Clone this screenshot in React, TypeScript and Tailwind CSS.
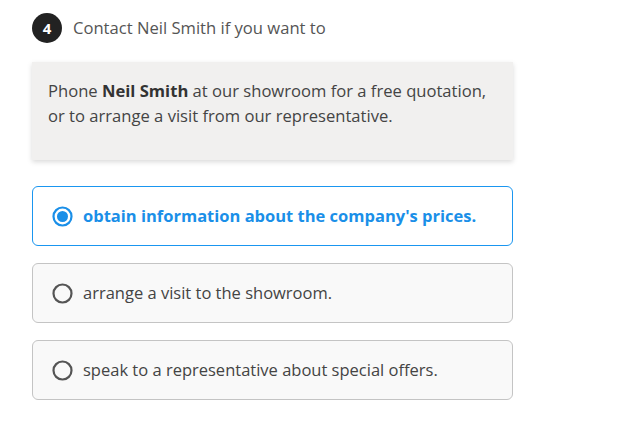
import React from "react";

const options = [
  { text: "obtain information about the company's prices.", selected: true },
  { text: "arrange a visit to the showroom.", selected: false },
  { text: "speak to a representative about special offers.", selected: false },
];

export default function App() {
  return (
    <div
      className="w-[641px] h-[445px] bg-white text-[#444]"
      style={{ fontFamily: '"Open Sans", sans-serif' }}
    >
      <div className="pl-[32px] pt-[13px] w-[513px]">
        <div className="flex items-center gap-[11px]">
          <div className="w-[30px] h-[30px] rounded-full bg-[#222] text-white flex items-center justify-center text-[15px] font-bold">
            4
          </div>
          <div className="text-[16.6px] text-[#555]">Contact Neil Smith if you want to</div>
        </div>
        <div className="mt-[19px] bg-[#f1f0ef] shadow-[0_2px_5px_rgba(0,0,0,0.15)] pl-[16px] pr-[12px] pt-[16px] pb-[32px] text-[16.6px] leading-[25px] text-[#444]">
          Phone <b className="font-bold text-[#333]">Neil Smith</b> at our showroom for a free quotation,
          <br />
          or to arrange a visit from our representative.
        </div>
        <div className="mt-[26px] flex flex-col gap-[17px]">
          {options.map((o) => (
            <div
              key={o.text}
              className={
                o.selected
                  ? "h-[60px] rounded-[6px] border border-[#1a96f0] bg-white flex items-center pl-[19px] gap-[10px]"
                  : "h-[60px] rounded-[6px] border border-[#c4c4c4] bg-[#f9f9f9] flex items-center pl-[19px] gap-[10px]"
              }
            >
              {o.selected ? (
                <svg width="21" height="21" viewBox="0 0 21 21">
                  <circle cx="10.5" cy="10.5" r="9" fill="none" stroke="#1a8fe8" strokeWidth="2.2" />
                  <circle cx="10.5" cy="10.5" r="5.5" fill="#1a8fe8" />
                </svg>
              ) : (
                <svg width="21" height="21" viewBox="0 0 21 21">
                  <circle cx="10.5" cy="10.5" r="9" fill="none" stroke="#555" strokeWidth="2.2" />
                </svg>
              )}
              <span
                className={
                  o.selected
                    ? "text-[16.5px] font-bold text-[#1a8fe8]"
                    : "text-[16.5px] text-[#444]"
                }
              >
                {o.text}
              </span>
            </div>
          ))}
        </div>
      </div>
    </div>
  );
}
